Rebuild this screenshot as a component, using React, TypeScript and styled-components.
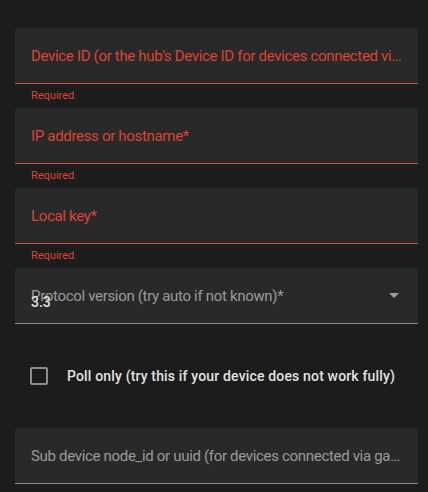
import React from 'react';
import styled, { createGlobalStyle } from 'styled-components';

const GlobalStyle = createGlobalStyle`
  body {
    margin: 0;
    background: #1c1c1c;
    font-family: Roboto, "Noto Sans", sans-serif;
  }
`;

const Form = styled.div`
  width: 403px;
  padding: 28px 10px 0 15px;
  display: flex;
  flex-direction: column;
`;

const Field = styled.div<{ $invalid?: boolean }>`
  position: relative;
  height: 55px;
  display: flex;
  align-items: center;
  padding: 0 16px;
  background: #292929;
  border-radius: 4px 4px 0 0;
  border-bottom: 1px solid ${(p) => (p.$invalid ? '#db4437' : '#8c8c8c')};
`;

const Label = styled.span<{ $invalid?: boolean }>`
  flex: 1;
  min-width: 0;
  font-size: 15px;
  letter-spacing: -0.32px;
  line-height: 20px;
  color: ${(p) => (p.$invalid ? '#db4437' : 'rgba(225, 225, 225, 0.62)')};
  white-space: nowrap;
  overflow: hidden;
  text-overflow: ellipsis;
`;

const Helper = styled.div`
  height: 24px;
  padding: 4px 16px 0;
  box-sizing: border-box;
  font-size: 11px;
  line-height: 16px;
  color: #db4437;
`;

const SelectValue = styled.span`
  position: absolute;
  left: 16px;
  top: 26px;
  font-size: 14px;
  line-height: 16px;
  font-weight: 500;
  color: #e1e1e1;
`;

const Arrow = styled.span`
  width: 0;
  height: 0;
  margin-right: 3px;
  border-left: 5px solid transparent;
  border-right: 5px solid transparent;
  border-top: 5px solid #9e9e9e;
`;

const CheckRow = styled.label`
  height: 104px;
  display: flex;
  align-items: center;
  gap: 19px;
  padding-left: 15px;
`;

const Box = styled.span`
  width: 18px;
  height: 18px;
  box-sizing: border-box;
  border: 2px solid #8c8c8c;
  border-radius: 2px;
`;

const CheckText = styled.span`
  font-size: 14px;
  font-weight: 500;
  letter-spacing: 0.16px;
  color: #e1e1e1;
`;

const requiredFields = [
  "Device ID (or the hub's Device ID for devices connected via gateway)*",
  'IP address or hostname*',
  'Local key*',
];

export default function App() {
  return (
    <>
      <GlobalStyle />
      <Form>
        {requiredFields.map((label) => (
          <React.Fragment key={label}>
            <Field $invalid>
              <Label $invalid>{label}</Label>
            </Field>
            <Helper>Required</Helper>
          </React.Fragment>
        ))}
        <Field>
          <Label>Protocol version (try auto if not known)*</Label>
          <SelectValue>3.3</SelectValue>
          <Arrow />
        </Field>
        <CheckRow>
          <Box />
          <CheckText>Poll only (try this if your device does not work fully)</CheckText>
        </CheckRow>
        <Field>
          <Label>Sub device node_id or uuid (for devices connected via gateway)</Label>
        </Field>
      </Form>
    </>
  );
}
